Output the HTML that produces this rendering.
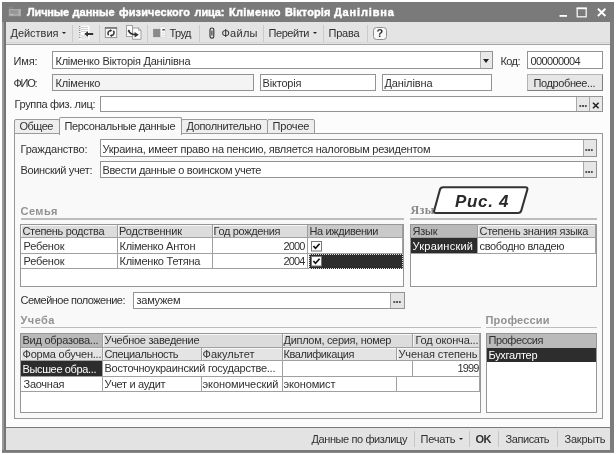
<!DOCTYPE html>
<html lang="ru">
<head>
<meta charset="utf-8">
<title>Личные данные физического лица</title>
<style>
html,body{margin:0;padding:0;background:#fff;}
body{width:616px;height:455px;position:relative;overflow:hidden;font-family:"Liberation Sans","DejaVu Sans",sans-serif;font-size:11px;color:#1c1c1c;}
.a{position:absolute;box-sizing:border-box;}
.t{position:absolute;white-space:nowrap;}
#txt,#lbl{position:absolute;left:0;top:0;width:616px;height:455px;will-change:transform;}
.arr{position:absolute;width:0;height:0;border-style:solid;border-color:#222 transparent transparent transparent;border-width:2.6px 2.6px 0 2.6px;}
</style>
</head>
<body>
<div class="a" style="left:2px;top:2px;width:612px;height:451px;background:#7c7c7c;"></div>
<div class="a" style="left:2px;top:2px;width:2px;height:451px;background:#9a9a9a;"></div>
<div class="a" style="left:4px;top:2px;width:2px;height:451px;background:#757575;"></div>
<div class="a" style="left:2px;top:449.5px;width:612px;height:3.5px;background:#7a7a7a;"></div>
<div class="a" style="left:2px;top:452px;width:612px;height:1px;background:#8a8a8a;"></div>
<div class="a" style="left:2px;top:2px;width:612px;height:20px;background:#7a7a7a;"></div>
<div class="a" style="left:6px;top:22px;width:604px;height:22.5px;background:#e4e4e4;border-bottom:1.5px solid #a4a4a4;"></div>
<div class="a" style="left:6px;top:42px;width:604px;height:1px;background:#d6d6d6;"></div>
<div class="a" style="left:6px;top:44.5px;width:604px;height:382.5px;background:#fcfcfc;"></div>
<div class="a" style="left:6px;top:427px;width:604px;height:22.5px;background:#e3e3e3;border-top:1px solid #7a7a7a;"></div>
<svg class="a" style="left:7px;top:5px;width:16px;height:13px" viewBox="7 5 16 13"><rect x="8.6" y="6.8" width="4.4" height="2.4" fill="#858585"/><rect x="8.8" y="9" width="11.8" height="7.2" fill="#a6a6a6"/><rect x="10" y="10.6" width="8" height="1" fill="#8c8c8c"/><rect x="10" y="12.4" width="8" height="1" fill="#8c8c8c"/><rect x="10" y="14.2" width="3" height="1" fill="#c4c4c4"/><rect x="19" y="9" width="1.6" height="7.2" fill="#b4b4b4"/></svg>
<svg class="a" style="left:556px;top:4px;width:54px;height:16px" viewBox="0 0 54 16"><rect x="3.5" y="11" width="7.5" height="1.8" fill="#fff"/><rect x="21.2" y="4.2" width="9" height="8.6" fill="none" stroke="#f4f4f4" stroke-width="1.3"/><rect x="20.6" y="3.6" width="10.2" height="1.6" fill="#fff"/><path d="M41.9 4.8 L49.4 12 M49.4 4.8 L41.9 12" stroke="#fff" stroke-width="1.9" fill="none"/></svg>
<div class="arr" style="left:62px;top:32px"></div>
<div class="a" style="left:72px;top:25px;width:1px;height:17px;background:#cbcbcb;"></div>
<div class="a" style="left:99px;top:25px;width:1px;height:17px;background:#cbcbcb;"></div>
<div class="a" style="left:147px;top:25px;width:1px;height:17px;background:#cbcbcb;"></div>
<div class="a" style="left:199px;top:25px;width:1px;height:17px;background:#cbcbcb;"></div>
<div class="a" style="left:263px;top:25px;width:1px;height:17px;background:#cbcbcb;"></div>
<div class="a" style="left:323px;top:25px;width:1px;height:17px;background:#cbcbcb;"></div>
<div class="a" style="left:367px;top:25px;width:1px;height:17px;background:#cbcbcb;"></div>
<div class="arr" style="left:312.5px;top:32px"></div>
<div class="a" style="left:372.5px;top:26.5px;width:14.0px;height:13.5px;background:#f8f8f8;border:1px solid #8e8e8e;border-radius:3.5px;"></div>
<div class="a" style="left:52px;top:51px;width:441px;height:18px;background:#fff;border:1px solid #939393;"></div>
<div class="a" style="left:480px;top:52px;width:12px;height:16px;background:#e9e9e9;border-left:1px solid #b0b0b0;"></div>
<div class="arr" style="left:483px;top:59px;border-width:4px 3.5px 0 3.5px"></div>
<div class="a" style="left:527px;top:51px;width:76px;height:18px;background:#fff;border:1px solid #939393;"></div>
<div class="a" style="left:52px;top:74px;width:202px;height:17px;background:#f4f4f4;border:1px solid #939393;"></div>
<div class="a" style="left:260px;top:74px;width:116px;height:17px;background:#fff;border:1px solid #939393;"></div>
<div class="a" style="left:382px;top:74px;width:110px;height:17px;background:#fff;border:1px solid #939393;"></div>
<div class="a" style="left:527px;top:74px;width:76px;height:17px;background:#e6e6e6;border:1px solid #8f8f8f;border-top-color:#b4b4b4;border-left-color:#b4b4b4;border-bottom-color:#7d7d7d;border-right-color:#7d7d7d;"></div>
<div class="a" style="left:100px;top:96px;width:503px;height:16px;background:#fff;border:1px solid #939393;"></div>
<div class="a" style="left:576px;top:97px;width:13px;height:14px;background:#e8e8e8;border-left:1px solid #a8a8a8;"></div>
<div class="a" style="left:589px;top:97px;width:13px;height:14px;background:#e8e8e8;border-left:1px solid #a8a8a8;"></div>
<svg class="a" style="left:591.6px;top:101.5px;width:8px;height:7px" viewBox="0 0 8 7"><path d="M1 0.8 L6.6 6.2 M6.6 0.8 L1 6.2" stroke="#222" stroke-width="1.5"/></svg>
<div class="a" style="left:14px;top:133px;width:589px;height:286px;background:#f9f9f9;border:1px solid #989898;"></div>
<div class="a" style="left:14px;top:119px;width:46px;height:15px;background:#eeeeee;border:1px solid #9a9a9a;border-radius:2px 2px 0 0;"></div>
<div class="a" style="left:181px;top:119px;width:87px;height:15px;background:#eeeeee;border:1px solid #9a9a9a;border-radius:2px 2px 0 0;"></div>
<div class="a" style="left:267px;top:119px;width:48px;height:15px;background:#eeeeee;border:1px solid #9a9a9a;border-radius:2px 2px 0 0;"></div>
<div class="a" style="left:59px;top:117px;width:123px;height:18px;background:#f9f9f9;border:1px solid #989898;border-bottom:none;border-radius:2px 2px 0 0;"></div>
<div class="a" style="left:100px;top:139px;width:497px;height:18px;background:#fff;border:1px solid #939393;"></div>
<div class="a" style="left:583px;top:140px;width:13px;height:16px;background:#e6e6e6;border-left:1px solid #a8a8a8;"></div>
<div class="a" style="left:100px;top:161px;width:497px;height:17px;background:#fff;border:1px solid #939393;"></div>
<div class="a" style="left:583px;top:162px;width:13px;height:15px;background:#e6e6e6;border-left:1px solid #a8a8a8;"></div>
<div class="a" style="left:21px;top:218px;width:383px;height:1.5px;background:#bdbdbd;"></div>
<div class="a" style="left:410px;top:218px;width:187px;height:1.5px;background:#bdbdbd;"></div>
<div class="a" style="left:21px;top:326.5px;width:460px;height:1.5px;background:#bdbdbd;"></div>
<div class="a" style="left:486px;top:326.5px;width:111px;height:1.5px;background:#bdbdbd;"></div>
<div class="a" style="left:20px;top:224px;width:384px;height:63px;background:#fff;border:1px solid #969696;"></div>
<div class="a" style="left:21px;top:225px;width:97px;height:13px;background:#dcdcdc;border-right:1px solid #a0a0a0;border-bottom:1px solid #a0a0a0;box-shadow:inset 1px 1px 0 #f7f7f7;"></div>
<div class="a" style="left:21px;top:238px;width:97px;height:15.5px;border-right:1px solid #a0a0a0;border-bottom:1px solid #a0a0a0;"></div>
<div class="a" style="left:21px;top:253.5px;width:97px;height:15.5px;border-right:1px solid #a0a0a0;border-bottom:1px solid #a0a0a0;"></div>
<div class="a" style="left:118px;top:225px;width:95px;height:13px;background:#dcdcdc;border-right:1px solid #a0a0a0;border-bottom:1px solid #a0a0a0;box-shadow:inset 1px 1px 0 #f7f7f7;"></div>
<div class="a" style="left:118px;top:238px;width:95px;height:15.5px;border-right:1px solid #a0a0a0;border-bottom:1px solid #a0a0a0;"></div>
<div class="a" style="left:118px;top:253.5px;width:95px;height:15.5px;border-right:1px solid #a0a0a0;border-bottom:1px solid #a0a0a0;"></div>
<div class="a" style="left:213px;top:225px;width:95px;height:13px;background:#dcdcdc;border-right:1px solid #a0a0a0;border-bottom:1px solid #a0a0a0;box-shadow:inset 1px 1px 0 #f7f7f7;"></div>
<div class="a" style="left:213px;top:238px;width:95px;height:15.5px;border-right:1px solid #a0a0a0;border-bottom:1px solid #a0a0a0;"></div>
<div class="a" style="left:213px;top:253.5px;width:95px;height:15.5px;border-right:1px solid #a0a0a0;border-bottom:1px solid #a0a0a0;"></div>
<div class="a" style="left:308px;top:225px;width:95px;height:13px;background:#c9c9c9;border-right:1px solid #a0a0a0;border-bottom:1px solid #a0a0a0;"></div>
<div class="a" style="left:308px;top:238px;width:95px;height:15.5px;border-right:1px solid #a0a0a0;border-bottom:1px solid #a0a0a0;"></div>
<div class="a" style="left:308px;top:253.5px;width:95px;height:15.5px;border-right:1px solid #a0a0a0;border-bottom:1px solid #a0a0a0;"></div>
<div class="a" style="left:309px;top:253.5px;width:94px;height:15.0px;background:#2d2d2d;outline:1px dotted #ddd;outline-offset:-1px;"></div>
<svg class="a" style="left:311px;top:241px;width:11px;height:10.5px" viewBox="0 0 11 10.5"><rect x="0.5" y="0.5" width="10" height="9.5" fill="#fff" stroke="#777"/><path d="M2.4 5 L4.5 7.3 L8.6 2.8" stroke="#111" stroke-width="1.7" fill="none"/></svg>
<svg class="a" style="left:311px;top:256px;width:11px;height:10.5px" viewBox="0 0 11 10.5"><rect x="0.5" y="0.5" width="10" height="9.5" fill="#fff" stroke="#777"/><path d="M2.4 5 L4.5 7.3 L8.6 2.8" stroke="#111" stroke-width="1.7" fill="none"/></svg>
<div class="a" style="left:410px;top:224px;width:187px;height:63px;background:#fff;border:1px solid #969696;"></div>
<div class="a" style="left:411px;top:225px;width:67px;height:13px;background:#b9b9b9;border-right:1px solid #a0a0a0;border-bottom:1px solid #a0a0a0;"></div>
<div class="a" style="left:478px;top:225px;width:118px;height:13px;background:#dcdcdc;border-right:1px solid #a0a0a0;border-bottom:1px solid #a0a0a0;box-shadow:inset 1px 1px 0 #f7f7f7;"></div>
<div class="a" style="left:411px;top:238px;width:67px;height:15.5px;background:#2d2d2d;border-right:1px solid #a0a0a0;border-bottom:1px solid #a0a0a0;"></div>
<div class="a" style="left:478px;top:238px;width:118px;height:15.5px;border-right:1px solid #a0a0a0;border-bottom:1px solid #a0a0a0;"></div>
<div class="a" style="left:133px;top:292px;width:272px;height:17px;background:#fff;border:1px solid #939393;"></div>
<div class="a" style="left:390px;top:293px;width:14px;height:15px;background:#e4e4e4;border-left:1px solid #a8a8a8;"></div>
<div class="a" style="left:20px;top:333px;width:461px;height:80px;background:#fff;border:1px solid #969696;"></div>
<div class="a" style="left:21px;top:334px;width:82px;height:14px;background:#b9b9b9;border-right:1px solid #a0a0a0;border-bottom:1px solid #a0a0a0;"></div>
<div class="a" style="left:103px;top:334px;width:180px;height:14px;background:#dcdcdc;border-right:1px solid #a0a0a0;border-bottom:1px solid #a0a0a0;box-shadow:inset 1px 1px 0 #f7f7f7;"></div>
<div class="a" style="left:283px;top:334px;width:130px;height:14px;background:#dcdcdc;border-right:1px solid #a0a0a0;border-bottom:1px solid #a0a0a0;box-shadow:inset 1px 1px 0 #f7f7f7;"></div>
<div class="a" style="left:413px;top:334px;width:67px;height:14px;background:#dcdcdc;border-right:1px solid #a0a0a0;border-bottom:1px solid #a0a0a0;box-shadow:inset 1px 1px 0 #f7f7f7;"></div>
<div class="a" style="left:21px;top:348px;width:82px;height:13px;background:#e4e4e4;border-right:1px solid #a0a0a0;border-bottom:1px solid #a0a0a0;box-shadow:inset 1px 1px 0 #f7f7f7;"></div>
<div class="a" style="left:103px;top:348px;width:99px;height:13px;background:#e4e4e4;border-right:1px solid #a0a0a0;border-bottom:1px solid #a0a0a0;box-shadow:inset 1px 1px 0 #f7f7f7;"></div>
<div class="a" style="left:202px;top:348px;width:81px;height:13px;background:#e4e4e4;border-right:1px solid #a0a0a0;border-bottom:1px solid #a0a0a0;box-shadow:inset 1px 1px 0 #f7f7f7;"></div>
<div class="a" style="left:283px;top:348px;width:114px;height:13px;background:#e4e4e4;border-right:1px solid #a0a0a0;border-bottom:1px solid #a0a0a0;box-shadow:inset 1px 1px 0 #f7f7f7;"></div>
<div class="a" style="left:397px;top:348px;width:83px;height:13px;background:#e4e4e4;border-right:1px solid #a0a0a0;border-bottom:1px solid #a0a0a0;box-shadow:inset 1px 1px 0 #f7f7f7;"></div>
<div class="a" style="left:21px;top:361px;width:82px;height:15.5px;background:#2d2d2d;border-right:1px solid #a0a0a0;border-bottom:1px solid #a0a0a0;"></div>
<div class="a" style="left:103px;top:361px;width:180px;height:15.5px;border-right:1px solid #a0a0a0;border-bottom:1px solid #a0a0a0;"></div>
<div class="a" style="left:283px;top:361px;width:130px;height:15.5px;border-right:1px solid #a0a0a0;border-bottom:1px solid #a0a0a0;"></div>
<div class="a" style="left:413px;top:361px;width:67px;height:15.5px;border-right:1px solid #a0a0a0;border-bottom:1px solid #a0a0a0;"></div>
<div class="a" style="left:21px;top:376.5px;width:82px;height:15.0px;border-right:1px solid #a0a0a0;border-bottom:1px solid #a0a0a0;"></div>
<div class="a" style="left:103px;top:376.5px;width:99px;height:15.0px;border-right:1px solid #a0a0a0;border-bottom:1px solid #a0a0a0;"></div>
<div class="a" style="left:202px;top:376.5px;width:81px;height:15.0px;border-right:1px solid #a0a0a0;border-bottom:1px solid #a0a0a0;"></div>
<div class="a" style="left:283px;top:376.5px;width:114px;height:15.0px;border-right:1px solid #a0a0a0;border-bottom:1px solid #a0a0a0;"></div>
<div class="a" style="left:397px;top:376.5px;width:83px;height:15.0px;border-right:1px solid #a0a0a0;border-bottom:1px solid #a0a0a0;"></div>
<div class="a" style="left:486px;top:333px;width:111px;height:80px;background:#fff;border:1px solid #969696;"></div>
<div class="a" style="left:487px;top:334px;width:109px;height:13.5px;background:#bababa;"></div>
<div class="a" style="left:487px;top:347.5px;width:109px;height:14.5px;background:#2d2d2d;"></div>
<div class="arr" style="left:459px;top:438px"></div>
<div class="a" style="left:414px;top:431px;width:1px;height:16px;background:#c6c6c6;"></div>
<div class="a" style="left:469px;top:431px;width:1px;height:16px;background:#c6c6c6;"></div>
<div class="a" style="left:498px;top:431px;width:1px;height:16px;background:#c6c6c6;"></div>
<div class="a" style="left:557px;top:431px;width:1px;height:16px;background:#c6c6c6;"></div>
<svg class="a" style="left:76px;top:24px;width:20px;height:18px" viewBox="76 24 20 18"><rect x="79" y="25.7" width="10.5" height="13.8" fill="#fdfdfd"/><path d="M81 27.5H88 M81 29.5H88 M81 31.5H88 M81 36H88 M81 38H88" stroke="#c9c9c9" stroke-width="0.9"/><path d="M79.2 26.6h1.2 M79.2 28.6h1.2 M79.2 30.5h1.2 M79.2 32.6h1.2 M79.2 35h1.2 M79.2 37.4h1.2" stroke="#555" stroke-width="0.9"/><path d="M84.2 34 L88 31.2 L88 33 L93.2 33 L93.2 35 L88 35 L88 36.8 Z" fill="#333"/></svg>
<svg class="a" style="left:103px;top:25px;width:16px;height:15px" viewBox="103 25 16 15"><rect x="105.3" y="27.8" width="11.4" height="9.8" fill="#fafafa" stroke="#8a8a8a" stroke-width="0.9"/><rect x="104.9" y="27.3" width="12.2" height="1.4" fill="#6a6a6a"/><path d="M108.6 35.2 C107.2 33.2 108.2 30.6 110.6 30.4 M113.4 30.8 C114.8 32.8 113.8 35.4 111.4 35.6" stroke="#333" stroke-width="1.5" fill="none"/><path d="M110 29.3 L112.4 30.6 L110.2 32 Z M112 37 L109.6 35.6 L111.8 34.2 Z" fill="#333"/></svg>
<svg class="a" style="left:124px;top:24px;width:20px;height:18px" viewBox="124 24 20 18"><rect x="126.6" y="25.4" width="5.8" height="11.2" fill="#fcfcfc" stroke="#8c8c8c" stroke-width="0.8"/><path d="M132.6 28 H138.6 L141 30.4 V39.3 H132.6 Z" fill="#fcfcfc" stroke="#8c8c8c" stroke-width="0.8"/><path d="M138.6 28 V30.4 H141" fill="none" stroke="#8c8c8c" stroke-width="0.7"/><path d="M128.6 30.6 C129.6 33.6 132 34.6 135 34.6" stroke="#333" stroke-width="1.7" fill="none"/><path d="M134.6 32 L138.8 34.7 L134.6 37.4 Z" fill="#333"/><path d="M127.6 31.6 L128.4 29.4 L130.4 31 Z" fill="#333"/></svg>
<svg class="a" style="left:151px;top:25px;width:17px;height:15px" viewBox="151 25 17 15"><rect x="160" y="27" width="5.6" height="10.6" fill="#fbfbfb" stroke="#cfcfcf" stroke-width="0.6"/><rect x="153.1" y="28.9" width="7.2" height="8.2" fill="#8a8a8a"/><rect x="162.4" y="29" width="2.4" height="1.5" fill="#444"/><path d="M161.5 33H164.6 M161.5 35.6H164.6" stroke="#c4c4c4" stroke-width="0.7"/></svg>
<svg class="a" style="left:207px;top:26px;width:10px;height:14px" viewBox="207 26 10 14"><path d="M210 36.4 V29.6 C210 27.4 213.8 27.4 213.8 29.6 V36.6 C213.8 38.8 210 38.8 210 36.6 M211.9 30.6 V35.6" stroke="#2f2f2f" stroke-width="1.1" fill="none"/></svg>

<div id="txt">
<span class="t" id="t0" style="left:27.1px;top:5.0px;font-size:11px;line-height:14.0px;color:#ffffff;letter-spacing:-0.206px;font-weight:bold;-webkit-text-stroke:0.4px #fff;">Личные</span>
<span class="t" id="t1" style="left:72.5px;top:5.0px;font-size:11px;line-height:14.0px;color:#ffffff;letter-spacing:0.019px;font-weight:bold;-webkit-text-stroke:0.4px #fff;">данные</span>
<span class="t" id="t2" style="left:119.1px;top:5.0px;font-size:11px;line-height:14.0px;color:#ffffff;letter-spacing:0.066px;font-weight:bold;-webkit-text-stroke:0.4px #fff;">физического</span>
<span class="t" id="t3" style="left:194.5px;top:5.0px;font-size:11px;line-height:14.0px;color:#ffffff;letter-spacing:-0.109px;font-weight:bold;-webkit-text-stroke:0.4px #fff;">лица:</span>
<span class="t" id="t4" style="left:229.1px;top:5.0px;font-size:11px;line-height:14.0px;color:#ffffff;letter-spacing:0.236px;font-weight:bold;-webkit-text-stroke:0.4px #fff;">Кліменко</span>
<span class="t" id="t5" style="left:284.9px;top:5.0px;font-size:11px;line-height:14.0px;color:#ffffff;letter-spacing:0.133px;font-weight:bold;-webkit-text-stroke:0.4px #fff;">Вікторія</span>
<span class="t" id="t6" style="left:333.9px;top:5.0px;font-size:11px;line-height:14.0px;color:#ffffff;letter-spacing:0.858px;font-weight:bold;-webkit-text-stroke:0.4px #fff;">Данілівна</span>
<span class="t" id="t7" style="left:10.5px;top:25.5px;font-size:11px;line-height:14.0px;color:#303030;letter-spacing:-0.029px;">Действия</span>
<span class="t" id="t8" style="left:169.5px;top:25.5px;font-size:11px;line-height:14.0px;color:#303030;letter-spacing:-0.552px;">Труд</span>
<span class="t" id="t9" style="left:221.5px;top:25.5px;font-size:11px;line-height:14.0px;color:#303030;letter-spacing:0.262px;">Файлы</span>
<span class="t" id="t10" style="left:268.5px;top:25.5px;font-size:11px;line-height:14.0px;color:#303030;letter-spacing:-0.432px;">Перейти</span>
<span class="t" id="t11" style="left:328.5px;top:25.5px;font-size:11px;line-height:14.0px;color:#303030;letter-spacing:-0.246px;">Права</span>
<span class="t" id="t12" style="left:376.5px;top:25.8px;font-size:11px;line-height:14.0px;color:#303030;letter-spacing:0.000px;font-weight:bold;">?</span>
<span class="t" id="t13" style="left:13.5px;top:54.2px;font-size:11px;line-height:14.0px;color:#303030;letter-spacing:-0.161px;">Имя:</span>
<span class="t" id="t14" style="left:55.5px;top:54.2px;font-size:11px;line-height:14.0px;color:#303030;letter-spacing:-0.248px;">Кліменко Вікторія Данілівна</span>
<span class="t" id="t15" style="left:500.5px;top:54.2px;font-size:11px;line-height:14.0px;color:#303030;letter-spacing:-0.589px;">Код:</span>
<span class="t" id="t16" style="left:530.5px;top:54.2px;font-size:11px;line-height:14.0px;color:#303030;letter-spacing:-0.633px;">000000004</span>
<span class="t" id="t17" style="left:13.5px;top:76.2px;font-size:11px;line-height:14.0px;color:#303030;letter-spacing:-1.297px;">ФИО:</span>
<span class="t" id="t18" style="left:55.5px;top:76.2px;font-size:11px;line-height:14.0px;color:#303030;letter-spacing:-0.156px;">Кліменко</span>
<span class="t" id="t19" style="left:262.5px;top:76.2px;font-size:11px;line-height:14.0px;color:#303030;letter-spacing:-0.183px;">Вікторія</span>
<span class="t" id="t20" style="left:384.5px;top:76.2px;font-size:11px;line-height:14.0px;color:#303030;letter-spacing:-0.123px;">Данілівна</span>
<span class="t" id="t21" style="left:533.5px;top:75.8px;font-size:11px;line-height:14.0px;color:#303030;letter-spacing:-0.384px;">Подробнее...</span>
<span class="t" id="t22" style="left:14.5px;top:97.2px;font-size:11px;line-height:14.0px;color:#303030;letter-spacing:-0.347px;">Группа физ. лиц:</span>
<span class="t" id="t23" style="left:578.5px;top:95.3px;font-size:13px;line-height:16.55px;color:#505050;letter-spacing:-0.922px;font-weight:bold;">...</span>
<span class="t" id="t24" style="left:19.5px;top:119.1px;font-size:11px;line-height:14.0px;color:#303030;letter-spacing:-0.508px;">Общее</span>
<span class="t" id="t25" style="left:186.5px;top:119.1px;font-size:11px;line-height:14.0px;color:#303030;letter-spacing:-0.348px;">Дополнительно</span>
<span class="t" id="t26" style="left:272.5px;top:119.1px;font-size:11px;line-height:14.0px;color:#303030;letter-spacing:-0.175px;">Прочее</span>
<span class="t" id="t27" style="left:64.5px;top:119.1px;font-size:11px;line-height:14.0px;color:#303030;letter-spacing:-0.394px;">Персональные данные</span>
<span class="t" id="t28" style="left:20.5px;top:142.2px;font-size:11px;line-height:14.0px;color:#303030;letter-spacing:-0.180px;">Гражданство:</span>
<span class="t" id="t29" style="left:102.5px;top:142.2px;font-size:11px;line-height:14.0px;color:#303030;letter-spacing:-0.246px;">Украина, имеет право на пенсию, является налоговым резидентом</span>
<span class="t" id="t30" style="left:584.5px;top:138.7px;font-size:13px;line-height:16.55px;color:#505050;letter-spacing:-0.922px;font-weight:bold;">...</span>
<span class="t" id="t31" style="left:20.5px;top:163.2px;font-size:11px;line-height:14.0px;color:#303030;letter-spacing:-0.340px;">Воинский учет:</span>
<span class="t" id="t32" style="left:102.5px;top:163.2px;font-size:11px;line-height:14.0px;color:#303030;letter-spacing:-0.349px;">Ввести данные о воинском учете</span>
<span class="t" id="t33" style="left:584.5px;top:160.5px;font-size:13px;line-height:16.55px;color:#505050;letter-spacing:-0.922px;font-weight:bold;">...</span>
<span class="t" id="t34" style="left:20.5px;top:203.7px;font-size:11px;line-height:14.0px;color:#929292;letter-spacing:0.441px;font-weight:bold;">Семья</span>
<span class="t" id="t35" style="left:410.5px;top:203.0px;font-size:12px;line-height:15.27px;color:#888888;letter-spacing:0.406px;font-weight:bold;font-family:'Liberation Serif',serif;">Язык</span>
<span class="t" id="t36" style="left:20.5px;top:313.2px;font-size:11px;line-height:14.0px;color:#929292;letter-spacing:0.469px;font-weight:bold;">Учеба</span>
<span class="t" id="t37" style="left:485.5px;top:313.2px;font-size:11px;line-height:14.0px;color:#929292;letter-spacing:0.180px;font-weight:bold;">Профессии</span>
<span class="t" id="t39" style="left:22.5px;top:224.4px;font-size:11px;line-height:14.0px;color:#303030;letter-spacing:-0.336px;">Степень родства</span>
<span class="t" id="t40" style="left:119.0px;top:224.4px;font-size:11px;line-height:14.0px;color:#303030;letter-spacing:-0.164px;">Родственник</span>
<span class="t" id="t41" style="left:213.5px;top:224.4px;font-size:11px;line-height:14.0px;color:#303030;letter-spacing:-0.342px;">Год рождения</span>
<span class="t" id="t42" style="left:309.5px;top:224.4px;font-size:11px;line-height:14.0px;color:#303030;letter-spacing:-0.399px;">На иждивении</span>
<span class="t" id="t43" style="left:23.5px;top:238.8px;font-size:11px;line-height:14.0px;color:#303030;letter-spacing:-0.193px;">Ребенок</span>
<span class="t" id="t44" style="left:119.5px;top:238.8px;font-size:11px;line-height:14.0px;color:#303030;letter-spacing:-0.281px;">Кліменко Антон</span>
<span class="t" id="t45" style="left:283.5px;top:238.8px;font-size:11px;line-height:14.0px;color:#303030;letter-spacing:-0.828px;">2000</span>
<span class="t" id="t46" style="left:23.5px;top:254.3px;font-size:11px;line-height:14.0px;color:#303030;letter-spacing:-0.193px;">Ребенок</span>
<span class="t" id="t47" style="left:119.5px;top:254.3px;font-size:11px;line-height:14.0px;color:#303030;letter-spacing:-0.228px;">Кліменко Тетяна</span>
<span class="t" id="t48" style="left:283.5px;top:254.3px;font-size:11px;line-height:14.0px;color:#303030;letter-spacing:-0.828px;">2004</span>
<span class="t" id="t49" style="left:412.5px;top:224.4px;font-size:11px;line-height:14.0px;color:#303030;letter-spacing:-0.240px;">Язык</span>
<span class="t" id="t50" style="left:479.5px;top:224.4px;font-size:11px;line-height:14.0px;color:#303030;letter-spacing:-0.288px;">Степень знания языка</span>
<span class="t" id="t51" style="left:412.5px;top:238.8px;font-size:11px;line-height:14.0px;color:#fff;letter-spacing:0.236px;">Украинский</span>
<span class="t" id="t52" style="left:479.5px;top:238.8px;font-size:11px;line-height:14.0px;color:#303030;letter-spacing:-0.365px;">свободно владею</span>
<span class="t" id="t53" style="left:20.5px;top:293.2px;font-size:11px;line-height:14.0px;color:#303030;letter-spacing:-0.528px;">Семейное положение:</span>
<span class="t" id="t54" style="left:136.5px;top:293.2px;font-size:11px;line-height:14.0px;color:#303030;letter-spacing:-0.253px;">замужем</span>
<span class="t" id="t55" style="left:392.5px;top:290.9px;font-size:13px;line-height:16.55px;color:#505050;letter-spacing:-0.922px;font-weight:bold;">...</span>
<span class="t" id="t56" style="left:22.5px;top:333.2px;font-size:11px;line-height:14.0px;color:#303030;letter-spacing:-0.252px;">Вид образова...</span>
<span class="t" id="t57" style="left:104.5px;top:333.2px;font-size:11px;line-height:14.0px;color:#303030;letter-spacing:-0.313px;">Учебное заведение</span>
<span class="t" id="t58" style="left:283.5px;top:333.2px;font-size:11px;line-height:14.0px;color:#303030;letter-spacing:-0.307px;">Диплом, серия, номер</span>
<span class="t" id="t59" style="left:415.5px;top:333.2px;font-size:11px;line-height:14.0px;color:#303030;letter-spacing:-0.154px;">Год оконча...</span>
<span class="t" id="t60" style="left:22.5px;top:347.4px;font-size:11px;line-height:14.0px;color:#303030;letter-spacing:-0.222px;">Форма обучен...</span>
<span class="t" id="t61" style="left:104.5px;top:347.4px;font-size:11px;line-height:14.0px;color:#303030;letter-spacing:-0.434px;">Специальность</span>
<span class="t" id="t62" style="left:202.5px;top:347.4px;font-size:11px;line-height:14.0px;color:#303030;letter-spacing:0.041px;">Факультет</span>
<span class="t" id="t63" style="left:283.5px;top:347.4px;font-size:11px;line-height:14.0px;color:#303030;letter-spacing:-0.416px;">Квалификация</span>
<span class="t" id="t64" style="left:398.5px;top:347.4px;font-size:11px;line-height:14.0px;color:#303030;letter-spacing:-0.113px;">Ученая степень</span>
<span class="t" id="t65" style="left:22.5px;top:361.5px;font-size:11px;line-height:14.0px;color:#fff;letter-spacing:-0.361px;">Высшее обра...</span>
<span class="t" id="t66" style="left:104.5px;top:361.4px;font-size:11px;line-height:14.0px;color:#303030;letter-spacing:-0.241px;">Восточноукраинский государстве...</span>
<span class="t" id="t67" style="left:457.5px;top:361.4px;font-size:11px;line-height:14.0px;color:#303030;letter-spacing:-0.828px;">1999</span>
<span class="t" id="t68" style="left:23.5px;top:376.8px;font-size:11px;line-height:14.0px;color:#303030;letter-spacing:-0.255px;">Заочная</span>
<span class="t" id="t69" style="left:104.5px;top:376.8px;font-size:11px;line-height:14.0px;color:#303030;letter-spacing:-0.318px;">Учет и аудит</span>
<span class="t" id="t70" style="left:202.5px;top:376.8px;font-size:11px;line-height:14.0px;color:#303030;letter-spacing:-0.086px;">экономический</span>
<span class="t" id="t71" style="left:283.5px;top:376.8px;font-size:11px;line-height:14.0px;color:#303030;letter-spacing:-0.139px;">экономист</span>
<span class="t" id="t72" style="left:488.5px;top:333.2px;font-size:11px;line-height:14.0px;color:#303030;letter-spacing:-0.428px;">Профессия</span>
<span class="t" id="t73" style="left:488.5px;top:348.0px;font-size:11px;line-height:14.0px;color:#fff;letter-spacing:-0.305px;">Бухгалтер</span>
<span class="t" id="t74" style="left:311.5px;top:431.9px;font-size:11px;line-height:14.0px;color:#303030;letter-spacing:-0.400px;">Данные по физлицу</span>
<span class="t" id="t75" style="left:420.5px;top:431.9px;font-size:11px;line-height:14.0px;color:#303030;letter-spacing:-0.209px;">Печать</span>
<span class="t" id="t76" style="left:475.5px;top:431.9px;font-size:11px;line-height:14.0px;color:#303030;letter-spacing:-0.500px;font-weight:bold;">OK</span>
<span class="t" id="t77" style="left:505.5px;top:431.9px;font-size:11px;line-height:14.0px;color:#303030;letter-spacing:-0.431px;">Записать</span>
<span class="t" id="t78" style="left:564.5px;top:431.9px;font-size:11px;line-height:14.0px;color:#303030;letter-spacing:-0.229px;">Закрыть</span>
</div>
<div id="lbl">
<svg class="a" style="left:428px;top:182px;width:106px;height:36px" viewBox="428 182 106 36"><path d="M439.9 189.8 Q440.6 187.3 443.2 187.3 L525.4 187.3 Q528.0 187.3 527.3 189.8 L521.3 210.5 Q520.6 213.0 518.0 213.0 L436.1 213.0 Q433.5 213.0 434.2 210.5 Z" fill="#fff" stroke="#333" stroke-width="2.1" stroke-linejoin="round"/></svg>
<span class="t" id="t38" style="left:455.0px;top:190.7px;font-size:17px;line-height:21.64px;color:#2a2a2a;letter-spacing:0.681px;font-weight:bold;font-style:italic;">Рис. 4</span>
</div>
</body>
</html>
